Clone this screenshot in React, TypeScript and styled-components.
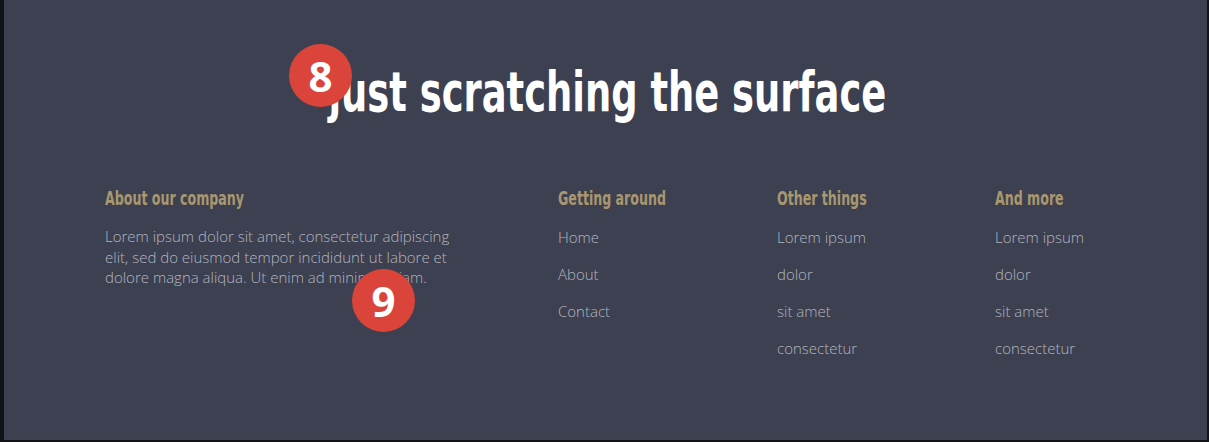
import React from "react";
import styled, { createGlobalStyle } from "styled-components";

const GlobalStyle = createGlobalStyle`
  html, body { margin: 0; padding: 0; background: #3c4051; }
  * { box-sizing: border-box; }
`;

const Frame = styled.div`
  position: relative;
  width: 1209px;
  height: 442px;
  background: #3c4051;
  border-left: 4px solid #121318;
  border-right: 2px solid #121318;
  border-bottom: 2px solid #121318;
  overflow: hidden;
`;

const Hero = styled.header`
  display: flex;
  justify-content: center;
  padding-top: 61px;
  padding-left: 4px;
  height: 186px;
`;

const Title = styled.h1`
  margin: 0;
  display: inline-block;
  font-family: "DejaVu Sans Condensed", sans-serif;
  font-weight: 700;
  font-size: 55px;
  line-height: 62px;
  color: #ffffff;
  white-space: nowrap;
  transform: scaleX(0.745);
  transform-origin: center;
`;

const Columns = styled.div`
  display: grid;
  grid-template-columns: 453px 219px 218px 1fr;
  padding-left: 101px;
`;

const Column = styled.section``;

const ColHeading = styled.h3`
  margin: 0 0 16px;
  font-family: "DejaVu Sans Condensed", sans-serif;
  font-weight: 700;
  font-size: 20px;
  line-height: 24px;
  color: #a9976f;
  white-space: nowrap;
  transform: scaleX(0.7);
  transform-origin: left center;
`;

const Paragraph = styled.p`
  margin: 0;
  width: 356px;
  font-family: "Open Sans", sans-serif;
  font-weight: 300;
  font-size: 15px;
  line-height: 20.5px;
  color: #b3b5bf;
`;

const LinkList = styled.ul`
  list-style: none;
  margin: 0;
  padding: 1px 0 0;
  display: flex;
  flex-direction: column;
  gap: 17px;
`;

const LinkItem = styled.li`
  font-family: "Open Sans", sans-serif;
  font-weight: 300;
  font-size: 15px;
  line-height: 20px;
  color: #b3b5bf;
`;

const Badge = styled.div<{ $x: number; $y: number }>`
  position: absolute;
  left: ${(p) => p.$x}px;
  top: ${(p) => p.$y}px;
  width: 63px;
  height: 63px;
  border-radius: 50%;
  background: #db443a;
  color: #fff;
  display: flex;
  align-items: center;
  justify-content: center;
  font-family: "Open Sans", sans-serif;
  font-weight: 700;
  font-size: 42px;
  line-height: 1;
`;

const cols = [
  { title: "Getting around", items: ["Home", "About", "Contact"] },
  { title: "Other things", items: ["Lorem ipsum", "dolor", "sit amet", "consectetur"] },
  { title: "And more", items: ["Lorem ipsum", "dolor", "sit amet", "consectetur"] },
];

export default function App() {
  return (
    <>
      <GlobalStyle />
      <Frame>
        <Hero>
          <Title>just scratching the surface</Title>
        </Hero>
        <Columns>
          <Column>
            <ColHeading>About our company</ColHeading>
            <Paragraph>
              Lorem ipsum dolor sit amet, consectetur adipiscing elit, sed do eiusmod tempor incididunt ut labore et
              dolore magna aliqua. Ut enim ad minim veniam.
            </Paragraph>
          </Column>
          {cols.map((c) => (
            <Column key={c.title}>
              <ColHeading>{c.title}</ColHeading>
              <LinkList>
                {c.items.map((i) => (
                  <LinkItem key={i}>{i}</LinkItem>
                ))}
              </LinkList>
            </Column>
          ))}
        </Columns>
        <Badge $x={285} $y={44}>8</Badge>
        <Badge $x={348} $y={269}>9</Badge>
      </Frame>
    </>
  );
}
